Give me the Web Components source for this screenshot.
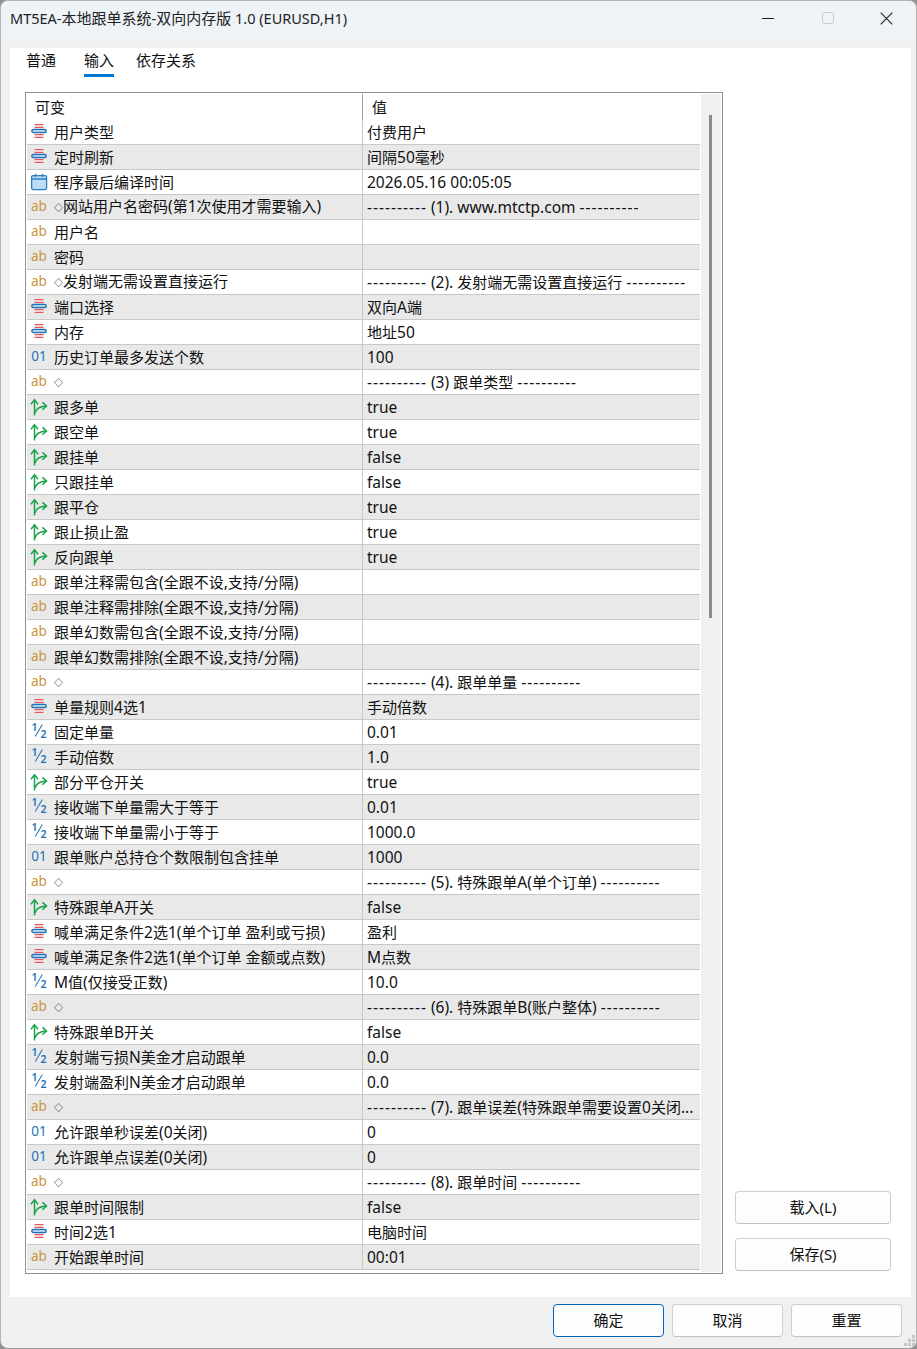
<!DOCTYPE html>
<html><head><meta charset="utf-8">
<style>
html,body{margin:0;padding:0;background:#8f8f8f;width:917px;height:1349px;overflow:hidden}
body{font:15px "Noto Sans","Noto Sans CJK SC",sans-serif;color:#111}
</style></head><body>
<mt-dialog>
<mt-titlebar slot="title"><span style="font-size:14.5px">MT5EA-</span>本地跟单系统<span style="font-size:14.5px">-</span>双向内存版<span style="font-size:14.5px"> 1.0 (EURUSD,H1)</span></mt-titlebar>
<mt-tabs slot="tabs"></mt-tabs>
<mt-grid slot="grid"></mt-grid>
<mt-btn slot="side">载入(L)</mt-btn>
<mt-btn slot="side">保存(S)</mt-btn>
<mt-btn slot="foot" primary>确定</mt-btn>
<mt-btn slot="foot">取消</mt-btn>
<mt-btn slot="foot">重置</mt-btn>
</mt-dialog>
<script>
function def(name,html,extra){
  customElements.define(name,class extends HTMLElement{
    constructor(){super();this.attachShadow({mode:'open'}).innerHTML=html;}
    connectedCallback(){if(extra)extra.call(this);}
  });
}
def('mt-dialog',`<style>
:host{display:flex;flex-direction:column;width:917px;height:1349px;background:#f0f0f0;border-radius:8px;overflow:hidden;box-sizing:border-box;border:1px solid #b4b4b4;border-bottom-color:#9a9a9a}
.main{flex:1;min-height:0;margin:10px 5px 0 9px;background:#fff;display:flex;flex-direction:column;padding:0 0 23px 15px;box-sizing:border-box}
.body{flex:1;min-height:0;display:flex;margin-top:14px}
.side{flex:1;display:flex;flex-direction:column;justify-content:flex-end;align-items:center;gap:14px;padding:0 20px 3px 12px}
.foot{height:51px;display:flex;justify-content:flex-end;align-items:flex-start;gap:8px;padding:7px 14px 0 0;box-sizing:border-box;position:relative;flex:none}
.grip{position:absolute;right:0;bottom:1px}
::slotted(mt-btn[slot=side]){width:156px;height:33px}
::slotted(mt-btn[slot=foot]){width:111px;height:33px}
</style>
<slot name="title"></slot>
<div class="main"><slot name="tabs"></slot>
<div class="body"><slot name="grid"></slot><div class="side"><slot name="side"></slot></div></div></div>
<div class="foot"><slot name="foot"></slot>
<svg class="grip" width="12" height="12" viewBox="0 0 12 12" fill="#c4c4c4"><rect x="8" y="0" width="3" height="3"/><rect x="4" y="4" width="3" height="3"/><rect x="8" y="4" width="3" height="3"/><rect x="0" y="8" width="3" height="3"/><rect x="4" y="8" width="3" height="3"/><rect x="8" y="8" width="3" height="3"/></svg>
</div>`);
def('mt-titlebar',`<style>
:host{display:flex;align-items:center;height:36px;padding:0 0 1px 9px;box-sizing:content-box;background:#eef3f8;font:15px "Noto Sans","Noto Sans CJK SC",sans-serif;color:#222;flex:none}
.t{flex:1;position:relative;top:-2px}
.c{display:flex;align-items:center;position:relative;top:-1px}
.c span{display:flex;width:59px;justify-content:center;align-items:center}
</style><div class="t"><slot></slot></div>
<div class="c">
<span style="position:relative;left:-1px"><svg width="12" height="12" viewBox="0 0 12 12"><path d="M0 6.5H12" stroke="#222" stroke-width="1"/></svg></span>
<span><svg width="12" height="12" viewBox="0 0 12 12"><rect x=".5" y=".5" width="11" height="11" rx="2" fill="none" stroke="#c6c9cc"/></svg></span>
<span><svg width="13" height="13" viewBox="0 0 13 13"><path d="M.7.7 12.3 12.3M12.3.7.7 12.3" stroke="#222" stroke-width="1.1" fill="none"/></svg></span>
</div>`);
def('mt-tabs',`<style>
:host{display:flex;height:30px;padding-left:1px;flex:none;font-size:15px;line-height:22px;box-sizing:border-box}
.tab{padding-top:1px;height:25px}
.tab.on{border-bottom:3px solid #0078d4;margin:0 22px 0 28px}
</style><div class="tab">普通</div><div class="tab on">输入</div><div class="tab">依存关系</div>`);
def('mt-btn',`<style>
:host{display:flex;align-items:center;justify-content:center;box-sizing:border-box;background:#fdfdfd;border:1px solid #cfcfcf;border-bottom-color:#c2c2c2;border-radius:4px;font-size:15px;color:#111;padding-bottom:2px}
:host([primary]){border-color:#0067c0}
</style><slot></slot>`);

const ICONS={
 e:`<svg width="16" height="14" viewBox="0 0 16 14" style="position:relative;top:-1px"><path d="M3.5 1H12.5V3H3.5ZM3.5 11H12.5V13H3.5Z" fill="#f7cdcf"/><path d="M3.5 .5H12.5M3.5 3.5H12.5M3.5 10.5H12.5M3.5 13.5H12.5" stroke="#e4575e" stroke-width="1"/><rect x=".8" y="5.5" width="14.4" height="3" rx="1.5" fill="#dcecf9" stroke="#1f72b6" stroke-width="1.4"/></svg>`,
 c:`<svg width="18" height="18" viewBox="0 0 18 18"><rect x="1.6" y="2.6" width="15" height="14" rx="1.5" fill="#bcdcf5" stroke="#2d7ebd" stroke-width="1.3"/><path d="M1.6 6H16.6" stroke="#2d7ebd" stroke-width="1.3"/><path d="M5.5 1V4M12.5 1V4" stroke="#2d7ebd" stroke-width="1.4"/></svg>`,
 b:`<svg width="18" height="18" viewBox="0 0 18 18" fill="none" stroke="#1aa34a" stroke-width="1.5"><path d="M4.5 17.5V2"/><path d="M1 6.3 4.5 1.8 8 6.3"/><path d="M5 15C6 10.5 10 8.5 16 8"/><path d="M12.4 4.4 16.5 8 12.4 11.8"/></svg>`
};
const rows=[
['e','用户类型','付费用户'],['e','定时刷新','间隔50毫秒'],['c','程序最后编译时间','2026.05.16 00:05:05'],
['ab','◇网站用户名密码(第1次使用才需要输入)','---------- (1). www.mtctp.com ----------'],['ab','用户名',''],['ab','密码',''],
['ab','◇发射端无需设置直接运行','---------- (2). 发射端无需设置直接运行 ----------'],['e','端口选择','双向A端'],['e','内存','地址50'],
['01','历史订单最多发送个数','100'],['ab','◇','---------- (3) 跟单类型 ----------'],
['b','跟多单','true'],['b','跟空单','true'],['b','跟挂单','false'],['b','只跟挂单','false'],['b','跟平仓','true'],['b','跟止损止盈','true'],['b','反向跟单','true'],
['ab','跟单注释需包含(全跟不设,支持/分隔)',''],['ab','跟单注释需排除(全跟不设,支持/分隔)',''],['ab','跟单幻数需包含(全跟不设,支持/分隔)',''],['ab','跟单幻数需排除(全跟不设,支持/分隔)',''],
['ab','◇','---------- (4). 跟单单量 ----------'],['e','单量规则4选1','手动倍数'],['f','固定单量','0.01'],['f','手动倍数','1.0'],['b','部分平仓开关','true'],['f','接收端下单量需大于等于','0.01'],['f','接收端下单量需小于等于','1000.0'],['01','跟单账户总持仓个数限制包含挂单','1000'],
['ab','◇','---------- (5). 特殊跟单A(单个订单) ----------'],['b','特殊跟单A开关','false'],['e','喊单满足条件2选1(单个订单 盈利或亏损)','盈利'],['e','喊单满足条件2选1(单个订单 金额或点数)','M点数'],['f','M值(仅接受正数)','10.0'],
['ab','◇','---------- (6). 特殊跟单B(账户整体) ----------'],['b','特殊跟单B开关','false'],['f','发射端亏损N美金才启动跟单','0.0'],['f','发射端盈利N美金才启动跟单','0.0'],
['ab','◇','---------- (7). 跟单误差(特殊跟单需要设置0关闭...'],['01','允许跟单秒误差(0关闭)','0'],['01','允许跟单点误差(0关闭)','0'],
['ab','◇','---------- (8). 跟单时间 ----------'],['b','跟单时间限制','false'],['e','时间2选1','电脑时间'],['ab','开始跟单时间','00:01']];
function icon(t){
 if(t==='ab')return `<span class="txt ab">ab</span>`;
 if(t==='01')return `<span class="txt zo">01</span>`;
 if(t==='f')return `<span class="txt fr"><i>1</i><u></u><b>2</b></span>`;
 return ICONS[t];
}
function fmt(s){
 return s.replace(/[\x20-\x7e]+/g,m=>`<span class="l">${m.replace(/-{3,}/g,d=>`<span class="d">${d}</span>`)}</span>`)
  .replace(/◇/g,'<span class="dia">◇</span>');
}
def('mt-grid',`<style>
:host{display:flex;width:698px;height:1182px;box-sizing:border-box;border:1px solid #8e9196;padding:1px;flex:none;background:#fff}
.list{width:673px;height:100%;overflow:hidden;flex:none}
.head{display:grid;grid-template-columns:335px 1fr;height:26px;line-height:27px;font-size:15px}
.head div{padding-left:8px}
.head div+div{border-left:1px solid #a0a0a0;height:26px;padding-left:9px}
.r{display:grid;grid-template-columns:335px 1fr;height:25px;box-sizing:border-box;border-bottom:1.5px solid #c8c8c8;line-height:24px;white-space:nowrap;font-size:15px}
.r:nth-child(even of .r){background:#e9e9e9}
.n{display:flex;align-items:center;overflow:hidden}
.i{width:27px;flex:none;display:flex;align-items:center;justify-content:center;padding-right:3px;box-sizing:border-box;height:22px}
.v{border-left:1px solid #c8c8c8;padding-left:4px;overflow:hidden}
.l{font-size:15.5px}.d{letter-spacing:1px}
.dia{font-size:9px;vertical-align:1px}
.txt{font-size:13.5px;line-height:18px;position:relative;top:-1px}
.ab{color:#c8963c}.zo{color:#2574b0;font-size:13.5px;top:-1px}
.fr{display:block;width:16px;height:18px;color:#1f72b6;top:0;position:relative}
.fr i,.fr b{position:absolute;font-style:normal;font-weight:600;font-size:10.5px;line-height:11px}
.fr i{left:.5px;top:-1px}.fr b{left:9.5px;top:6px}
.fr u{position:absolute;left:.6px;top:7.25px;width:13.9px;height:1.4px;background:#1f72b6;transform:rotate(-60deg)}
.sb{flex:1;background:#f0f0f0;position:relative;margin-left:1px}
.th{position:absolute;left:8px;top:21px;width:3px;height:503px;background:#8a8a8a}
</style><div class="list" id="l"><div class="head"><div>可变</div><div>值</div></div></div><div class="sb"><div class="th"></div></div>`,
function(){const l=this.shadowRoot.getElementById('l');
 l.insertAdjacentHTML('beforeend',rows.map(r=>`<div class="r"><div class="n"><span class="i">${icon(r[0])}</span><span>${fmt(r[1])}</span></div><div class="v">${fmt(r[2])}</div></div>`).join(''));
});
</script>
</body></html>
